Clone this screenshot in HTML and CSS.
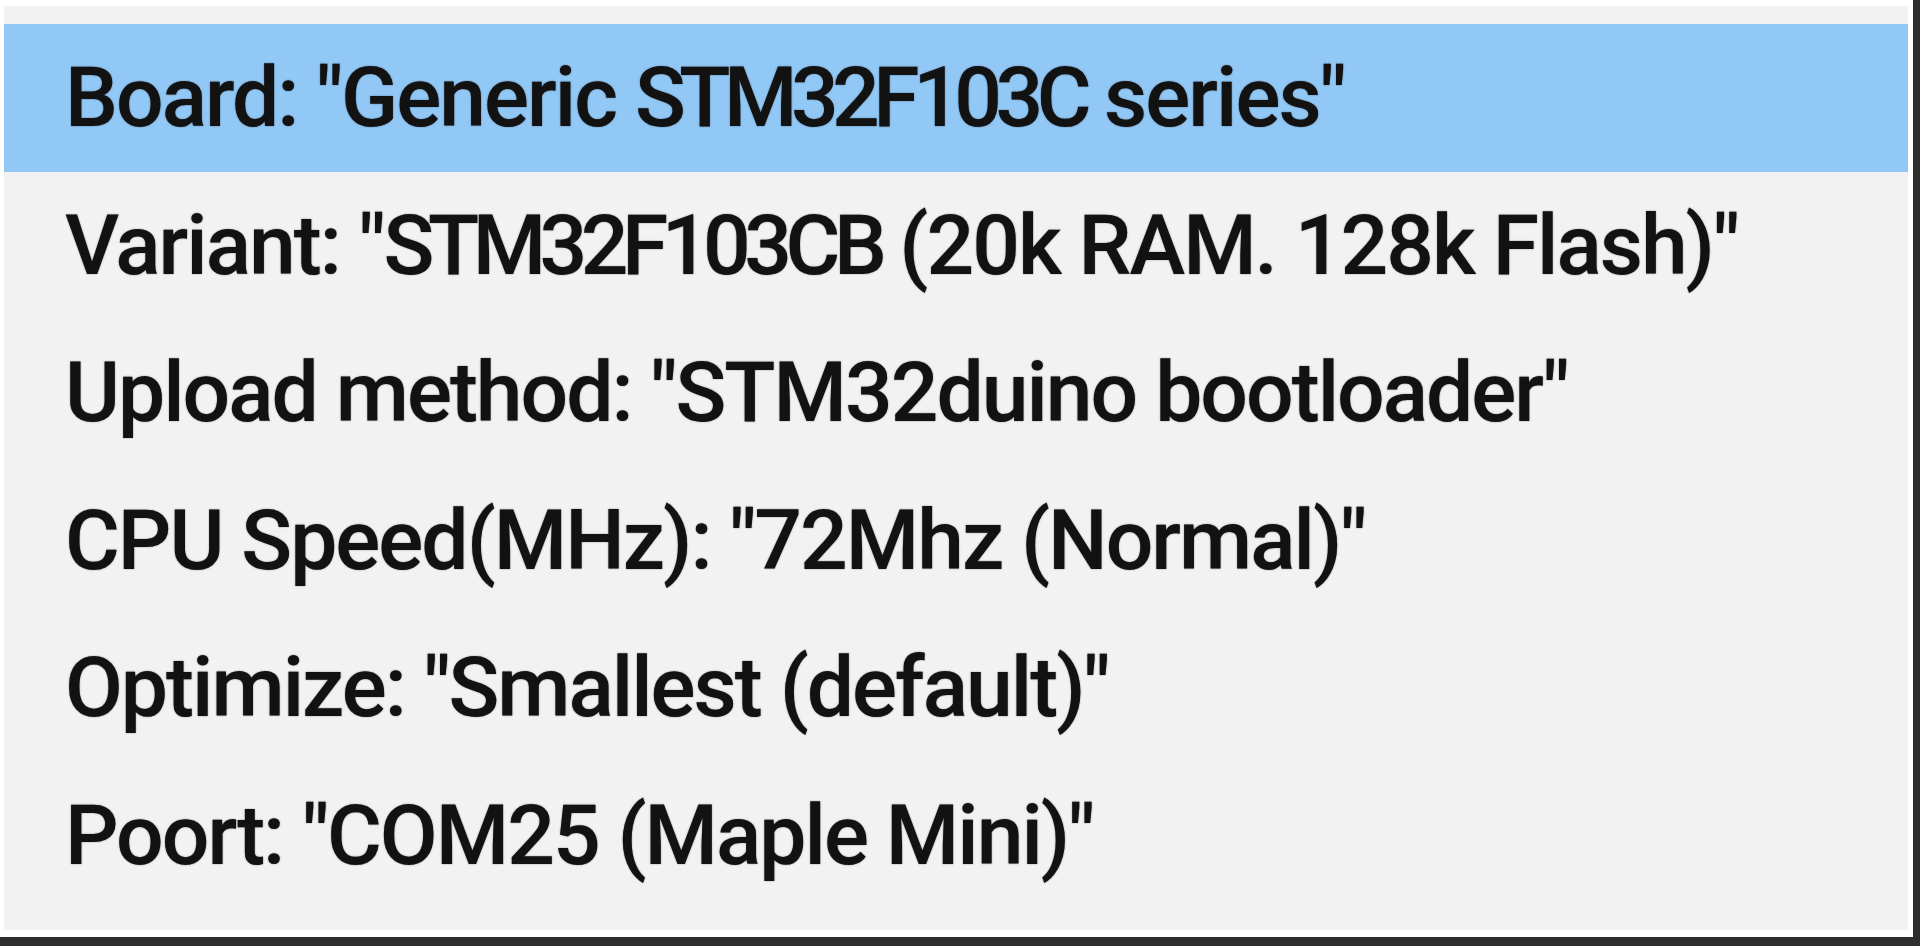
FILE: index.html
```html
<!DOCTYPE html>
<html lang="en">
<head>
<meta charset="utf-8">
<title>Tools menu</title>
<link rel="stylesheet" href="styles.css">
</head>
<body>
<div class="window">
  <div class="menu">
    <ul class="items">
      <li class="item item-active">Board: "Generic <span class="model">STM32F103C</span> series"</li>
      <li class="item">Variant: "<span class="model">STM32F103CB</span> (20k RAM. 128k Flash)"</li>
      <li class="item">Upload method: "STM32duino bootloader"</li>
      <li class="item">CPU Speed(MHz): "72Mhz (Normal)"</li>
      <li class="item">Optimize: "Smallest (default)"</li>
      <li class="item">Poort: "COM25 (Maple Mini)"</li>
    </ul>
  </div>
</div>
</body>
</html>
```
FILE: styles.css
```css
html, body {
  margin: 0;
  padding: 0;
  background: #ffffff;
}

.window {
  width: 1920px;
  height: 946px;
  box-sizing: border-box;
  border-right: 7px solid #2e2e2e;
  border-bottom: 9px solid #2e2e2e;
  background: #ffffff;
  padding: 6px 5px 7px 4px;
}

.menu {
  height: 100%;
  background: #f2f2f2;
  padding-top: 18px;
  box-sizing: border-box;
}

.items {
  list-style: none;
  margin: 0;
  padding: 0;
}

.item {
  height: 147.6px;
  box-sizing: border-box;
  padding-left: 61px;
  font-family: "Roboto", "Open Sans", sans-serif;
  font-size: 84px;
  font-weight: 500;
  letter-spacing: -2px;
  line-height: 147.6px;
  color: #121212;
  white-space: nowrap;
  text-shadow: 0 0 1.5px rgba(18, 18, 18, 0.6);
}

.model {
  letter-spacing: -6.5px;
}

.item-active {
  background: #92c8f6;
}
```
